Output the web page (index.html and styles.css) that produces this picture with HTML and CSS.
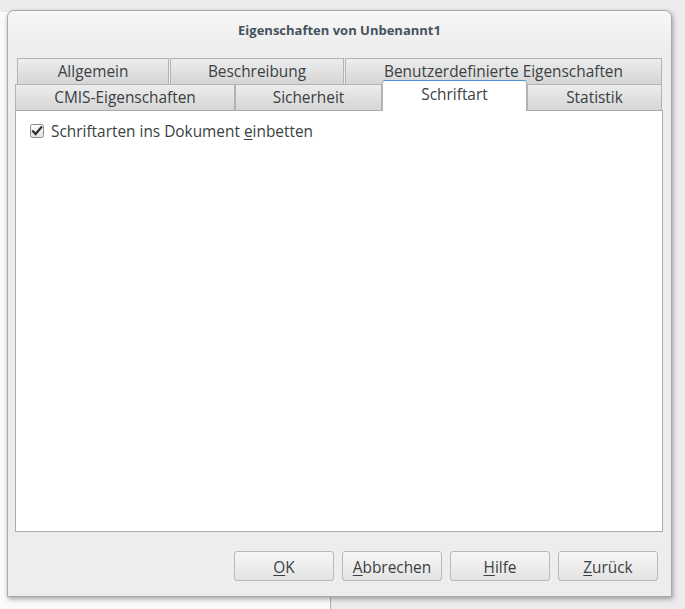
FILE: index.html
```html
<!DOCTYPE html>
<html lang="de">
<head>
  <meta charset="UTF-8" />
  <title>Eigenschaften von Unbenannt1</title>
  <link rel="stylesheet" href="styles.css">
</head>
<body>

  <div class="behind-window"></div>

  <div class="dialog">
    <div class="titlebar">Eigenschaften von Unbenannt1</div>

    <div class="dialog-body">
      <div class="tabs">
        <div class="tab-row tab-row-back">
          <div class="tab tab-allgemein">Allgemein</div>
          <div class="tab tab-beschreibung">Beschreibung</div>
          <div class="tab tab-benutzer">Benutzerdefinierte Eigenschaften</div>
        </div>
        <div class="tab-row tab-row-front">
          <div class="tab tab-cmis">CMIS-Eigenschaften</div>
          <div class="tab tab-sicherheit">Sicherheit</div>
          <div class="tab tab-schriftart active">Schriftart</div>
          <div class="tab tab-statistik">Statistik</div>
        </div>
      </div>

      <div class="panel">
        <label class="check">
          <svg class="check-box" width="14" height="14" viewBox="0 0 14 14">
            <defs>
              <linearGradient id="boxFill" x1="0" y1="0" x2="0" y2="1">
                <stop offset="0" stop-color="#ffffff" />
                <stop offset="1" stop-color="#e2e2e2" />
              </linearGradient>
            </defs>
            <rect x="0.5" y="0.5" width="13" height="13" rx="2" fill="url(#boxFill)" stroke="#8e8e8e" />
            <path d="M3 7.2 L5.6 10 L11.2 3.4" fill="none" stroke="#2e3436" stroke-width="2.2" stroke-linecap="square" stroke-linejoin="miter" />
          </svg>
          <span>Schriftarten ins Dokument <u>e</u>inbetten</span>
        </label>
      </div>

      <div class="buttons">
        <button class="btn"><u>O</u>K</button>
        <button class="btn"><u>A</u>bbrechen</button>
        <button class="btn"><u>H</u>ilfe</button>
        <button class="btn"><u>Z</u>urück</button>
      </div>
    </div>
  </div>

</body>
</html>
```

FILE: styles.css
```css
* {
  box-sizing: border-box;
  margin: 0;
  padding: 0;
  font-family: 'Open Sans', 'DejaVu Sans', sans-serif;
}

body {
  width: 685px;
  height: 609px;
  overflow: hidden;
  background: #ececec;
  position: relative;
  color: #3a3f42;
  font-size: 15.4px;
}

/* window lying behind the dialog */
.behind-window {
  position: absolute;
  left: 0;
  top: 12px;
  width: 331px;
  height: 600px;
  background: #fafafa;
  border-right: 1px solid #b4b4b4;
}

.dialog {
  position: absolute;
  left: 7px;
  top: 10px;
  width: 665px;
  height: 587px;
  display: flex;
  flex-direction: column;
  background: #ededed;
  border: 1px solid #a9a9a9;
  border-radius: 7px 7px 0 0;
  box-shadow: 1px 2px 5px rgba(0, 0, 0, 0.35);
}

.titlebar {
  height: 39px;
  display: flex;
  align-items: center;
  justify-content: center;
  padding-top: 1px;
  font-size: 13px;
  font-weight: bold;
  color: #46525e;
  background: linear-gradient(#f7f7f7, #ededed);
  border-radius: 7px 7px 0 0;
}

.dialog-body {
  flex: 1;
  display: flex;
  flex-direction: column;
  padding: 10px 8px 15px 7px;
}

.tab-row {
  display: flex;
  height: 26px;
}

.tab-row-back {
  padding-left: 2px;
  gap: 1px;
}

.tab-row-front {
  align-items: flex-end;
}

.tab {
  height: 26px;
  display: flex;
  align-items: center;
  justify-content: center;
  background: linear-gradient(#ededed, #d5d5d5);
  border: 1px solid #b3b3b3;
  border-bottom: none;
  color: #3a3f42;
  white-space: nowrap;
}

.tab-allgemein { width: 152px; }
.tab-beschreibung { width: 174px; }
.tab-benutzer { width: 317px; }

.tab-cmis { width: 220px; }
.tab-sicherheit { width: 147px; }
.tab-schriftart { width: 145px; }
.tab-statistik { width: 135px; }

.tab.active {
  height: 31px;
  margin-top: -5px;
  margin-bottom: -1px;
  padding-bottom: 4px;
  background: #ffffff;
  border-color: #b3b3b3;
  border-top: 1px solid #4a90d9;
  border-radius: 3px 3px 0 0;
  position: relative;
  z-index: 1;
}

.panel {
  height: 422px;
  background: #ffffff;
  border: 1px solid #ababab;
  padding: 13px 14px;
}

.check {
  display: flex;
  align-items: center;
  gap: 7px;
  height: 14px;
}

.check-box {
  flex: none;
}

.buttons {
  display: flex;
  justify-content: flex-end;
  gap: 8px;
  margin-top: 19px;
  padding-right: 5px;
}

.btn {
  width: 100px;
  height: 30px;
  border: 1px solid #b9b9b9;
  border-radius: 3px;
  background: linear-gradient(#f6f6f6, #e3e3e3);
  color: #3a3f42;
  font-size: 15.4px;
  padding-top: 2px;
}

u {
  text-decoration-thickness: 1px;
  text-underline-offset: 2px;
}
```
